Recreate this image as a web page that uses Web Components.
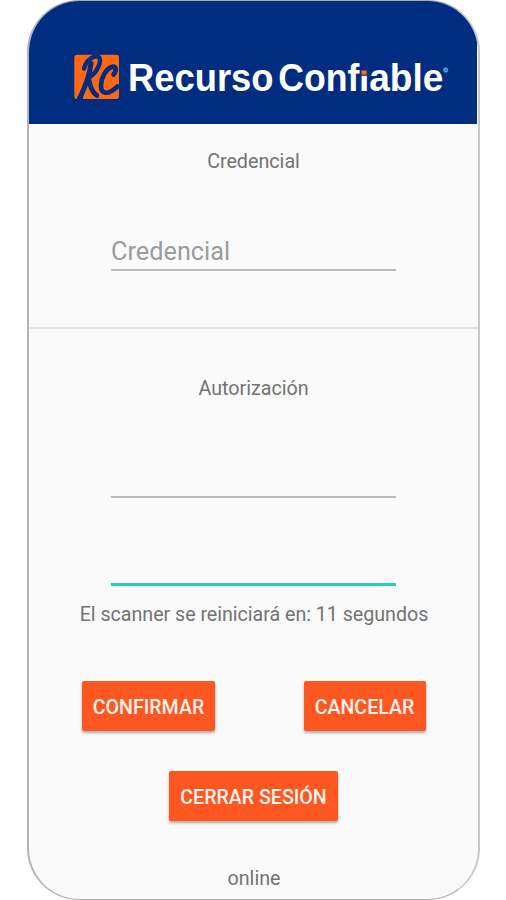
<!DOCTYPE html>
<html lang="es"><head><meta charset="utf-8"><title>Recurso Confiable</title>
<style>html,body{margin:0;background:#fff}body{font-family:Roboto,"Liberation Sans",sans-serif;color:#737373}</style></head>
<body>
<phone-frame>
  <brand-header></brand-header>
  <form-section class="first" heading="Credencial"><line-field hint="Credencial"></line-field></form-section>
  <form-section class="second" heading="Autorización"><line-field></line-field><line-field active></line-field></form-section>
  <scan-status>El scanner se reiniciará en: 11 segundos</scan-status>
  <action-bar></action-bar>
  <net-state>online</net-state>
</phone-frame>
<script>
const define = (name, html, setup) => customElements.define(name, class extends HTMLElement {
  connectedCallback() {
    if (this.shadowRoot) return;
    this.attachShadow({ mode: 'open' }).innerHTML = html;
    if (setup) setup(this, this.shadowRoot);
  }
});
define('phone-frame', `<style>
:host{display:flex;flex-direction:column;box-sizing:border-box;width:453px;height:900px;margin-left:27px;border:solid;border-width:1px 2px 1px 2px;border-color:#a8a8a8 #c8c8c8 #b0b0b0 #b4b4b4;border-radius:52px;overflow:hidden;background:#fafafa;align-items:stretch}
</style><slot></slot>`);
define('brand-header', `<style>
:host{display:block;height:122.5px;flex:none;background:#002d80;margin-right:1px}
svg{display:block;width:448px;height:122px}
</style><svg viewBox="29 1 448 122">
<rect x="74.3" y="54.8" width="44.7" height="44.2" rx="3" fill="#ff6813"/>
<g fill="none" stroke="#002d80" stroke-linecap="round" stroke-linejoin="round">
<path stroke-width="5" d="M91 63.5 C89.5 75 85.5 86 80.3 97"/>
<path stroke-width="4.4" d="M84 68.5 C85 63 90 57.5 95 56.5 C100.5 55.5 101.3 60.5 98.5 66.5 C96 72 92 76 88.5 77.5"/>
<path stroke-width="4.8" d="M88.5 78 C90 85 91.5 92 97 95.5"/>
<path stroke-width="4.7" d="M113.6 74.5 C117.5 69.5 115.5 65.5 111.5 67 C105.5 69.2 101.5 78 101 85 C100.5 94.5 108 95.5 117.5 86.5"/>
</g>
<rect x="77" y="96.5" width="6" height="4" fill="#002d80"/>
<g font-family="Liberation Sans,sans-serif" font-weight="700" font-size="38" fill="#fff" style="font-variant-ligatures:none">
<text x="128" y="90.5" textLength="145.5" lengthAdjust="spacingAndGlyphs">Recurso</text>
<text y="90.5"><tspan x="278.3" textLength="81" lengthAdjust="spacingAndGlyphs">Conf</tspan><tspan x="358.9" textLength="84.4" lengthAdjust="spacingAndGlyphs">iable</tspan></text></g>
<rect x="360.6" y="60.5" width="7.2" height="15.3" fill="#002d80"/>
<rect x="361.4" y="70.4" width="5.2" height="4.3" fill="#ff6813"/>
<circle cx="445.7" cy="70" r="2.2" fill="#388fc2" stroke="#58b7d8" stroke-width=".7"/>
</svg>`);
define('form-section', `<style>
:host{display:flex;flex-direction:column;box-sizing:border-box;flex:none}
:host(.first){height:205.5px;border-bottom:2px solid #e1e1e1}
:host(.second){height:259px}
h2{margin:0;text-align:center;font-weight:400;font-size:19.7px;line-height:24px;padding:26px 0 0 0}
:host(.second) h2{padding-top:48px}
.fields{display:flex;flex-direction:column;padding-left:82px}
:host(.first) .fields{padding-top:54.5px}
:host(.second) .fields{padding-top:54px;gap:42px}
</style><h2></h2><div class="fields"><slot></slot></div>`, (e, r) => r.querySelector('h2').textContent = e.getAttribute('heading'));
define('line-field', `<style>
:host{display:block;box-sizing:border-box;width:285px;height:43px;border-bottom:2px solid #bbb;color:#9c9c9c;font-size:25.3px;line-height:47px}
:host([active]){height:46px;border-bottom:3px solid #28cdbb}
</style><span></span>`, (e, r) => r.querySelector('span').textContent = e.getAttribute('hint') || '');
define('scan-status', `<style>:host{display:block;text-align:center;font-size:19.7px;line-height:24px;padding:15px 0 0 1px;white-space:nowrap;letter-spacing:-.04px}</style><slot></slot>`);
define('action-bar', `<style>
:host{display:flex;flex-direction:column;align-items:center;gap:40px;padding-top:53.5px}
.row{display:flex;align-self:stretch;justify-content:space-between;padding:0 52.5px 0 53px}
</style><div class="row"><raised-button style="--w:133px">CONFIRMAR</raised-button><raised-button style="--w:122px">CANCELAR</raised-button></div><raised-button style="--w:169px">CERRAR SESIÓN</raised-button>`);
define('raised-button', `<style>
:host{display:block}
button{all:unset;display:block;box-sizing:border-box;width:var(--w);height:50px;border-radius:2px;background:#ff5722;color:#fff3ec;text-align:center;font-size:19.6px;font-weight:500;line-height:53px;white-space:nowrap;box-shadow:0 2px 3px rgba(0,0,0,.32)}
</style><button><slot></slot></button>`);
define('net-state', `<style>:host{display:block;text-align:center;font-size:19.7px;line-height:24px;padding:46px 0 0 1px}</style><slot></slot>`);
</script></body></html>
